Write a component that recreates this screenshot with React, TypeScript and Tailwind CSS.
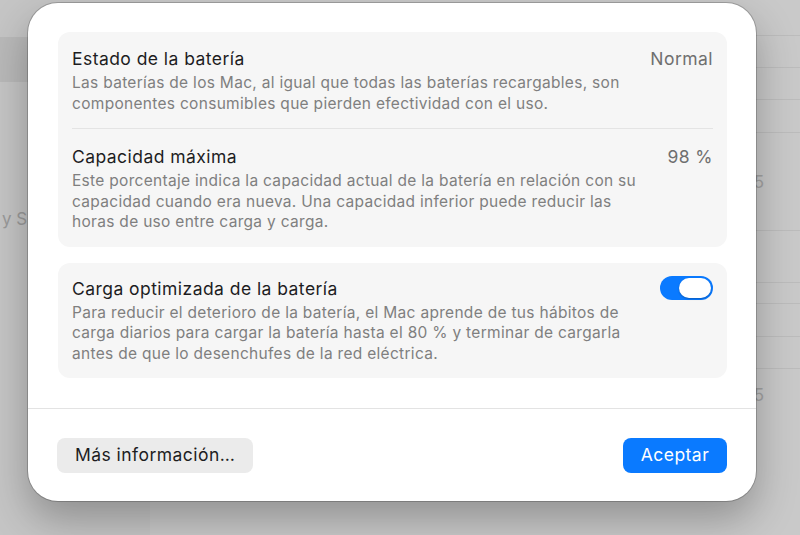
import React from 'react';

const font = { fontFamily: 'Inter, "Noto Sans", sans-serif' };

function Lines({ lines }: { lines: string[] }) {
    return (
        <div className="mt-[3px] text-[15.5px] leading-[20.5px] tracking-[0.3px] text-[#7f7f7f]">
            {lines.map((l) => (
                <div key={l} className="whitespace-nowrap">
                    {l}
                </div>
            ))}
        </div>
    );
}

function Row({ title, value, lines, right }: { title: string; value?: string; lines: string[]; right?: React.ReactNode }) {
    return (
        <div className="flex items-start justify-between">
            <div>
                <div className="text-[17.5px] leading-[23px] tracking-[0.45px] text-[#1d1d1f]">{title}</div>
                <Lines lines={lines} />
            </div>
            {value && <div className="text-[17.5px] leading-[23px] tracking-[0.45px] text-[#6f6f6f]">{value}</div>}
            {right}
        </div>
    );
}

function Toggle() {
    return (
        <div className="mt-[-1px] flex h-[24px] w-[53px] items-center justify-end rounded-full bg-[#0a7aff] p-[2px]">
            <div className="h-[20px] w-[32px] rounded-full bg-white shadow-[0_1px_2px_rgba(0,0,0,0.25)]" />
        </div>
    );
}

function Background() {
    const rightLines = [35, 67, 99, 132, 230, 282, 303, 336, 368];
    return (
        <div className="absolute inset-0 flex">
            <div className="relative h-full w-[150px] bg-[#c5c5c5]">
                <div className="absolute left-0 top-[37px] h-[45px] w-full bg-[#b9b9b9]" />
                <div className="absolute left-[2px] top-[207px] text-[17px] text-[#9a9a9a]">y S</div>
            </div>
            <div className="relative h-full flex-1 bg-[#c9c9c9]">
                {rightLines.map((y) => (
                    <div key={y} className="absolute right-0 h-px w-[50px] bg-[#bcbcbc]" style={{ top: y }} />
                ))}
                <div className="absolute right-[36px] top-[170px] text-[17px] text-[#a3a3a3]">5</div>
                <div className="absolute right-[36px] top-[383px] text-[17px] text-[#a3a3a3]">5</div>
            </div>
        </div>
    );
}

export default function App() {
    return (
        <div className="relative h-[535px] w-[800px] overflow-hidden" style={font}>
            <Background />
            <div className="absolute left-[28px] top-[3px] flex h-[498px] w-[728px] flex-col rounded-[30px] bg-white shadow-[0_0_0_1px_rgba(0,0,0,0.2),0_18px_40px_rgba(0,0,0,0.28)]">
                <div className="flex flex-col gap-[16px] pl-[30px] pr-[29px] pt-[29px]">
                    <div className="rounded-[12px] bg-[#f6f6f6] px-[14px]">
                        <div className="pb-[14px] pt-[15px]">
                            <Row
                                title="Estado de la batería"
                                value="Normal"
                                lines={[
                                    'Las baterías de los Mac, al igual que todas las baterías recargables, son',
                                    'componentes consumibles que pierden efectividad con el uso.',
                                ]}
                            />
                        </div>
                        <div className="h-px bg-[#e4e4e4]" />
                        <div className="pb-[14px] pt-[16px]">
                            <Row
                                title="Capacidad máxima"
                                value="98 %"
                                lines={[
                                    'Este porcentaje indica la capacidad actual de la batería en relación con su',
                                    'capacidad cuando era nueva. Una capacidad inferior puede reducir las',
                                    'horas de uso entre carga y carga.',
                                ]}
                            />
                        </div>
                    </div>
                    <div className="rounded-[12px] bg-[#f6f6f6] px-[14px] pb-[14px] pt-[14px]">
                        <Row
                            title="Carga optimizada de la batería"
                            lines={[
                                'Para reducir el deterioro de la batería, el Mac aprende de tus hábitos de',
                                'carga diarios para cargar la batería hasta el 80 % y terminar de cargarla',
                                'antes de que lo desenchufes de la red eléctrica.',
                            ]}
                            right={<Toggle />}
                        />
                    </div>
                </div>
                <div className="mt-[30px] h-px bg-[#e3e3e3]" />
                <div className="flex items-center justify-between pl-[29px] pr-[29px] pt-[29px]">
                    <button className="h-[35px] w-[196px] rounded-[8px] bg-[#ebebeb] pl-[18px] text-left text-[17.5px] tracking-[0.45px] text-[#1d1d1f]">
                        Más información…
                    </button>
                    <button className="h-[35px] w-[104px] rounded-[8px] bg-[#0a7aff] text-[17.5px] tracking-[0.45px] text-white">
                        Aceptar
                    </button>
                </div>
            </div>
        </div>
    );
}
